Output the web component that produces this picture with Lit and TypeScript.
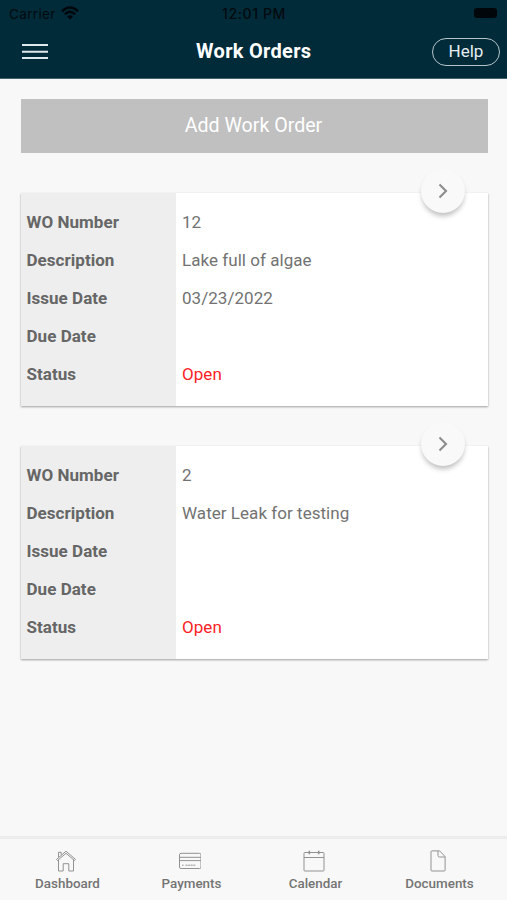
import { LitElement, html, css, svg } from "lit";
import { customElement, property } from "lit/decorators.js";

interface WorkOrder {
  number: string;
  description: string;
  issued: string;
  due: string;
  status: string;
}

const orders: WorkOrder[] = [
  { number: "12", description: "Lake full of algae", issued: "03/23/2022", due: "", status: "Open" },
  { number: "2", description: "Water Leak for testing", issued: "", due: "", status: "Open" },
];

const tabs = [
  {
    label: "Dashboard",
    icon: svg`<path d="M1.500 9.400 11 1.200l9.500 8.200-1 1.100L11 3.300l-8.500 7.200z"/><path d="M3.500 7V2.300h2.700v2.500M3.500 10v11h4.700v-7.300h5.600V21h4.700V10"/>`,
  },
  {
    label: "Payments",
    icon: svg`<rect x=".5" y="3.300" width="21.500" height="15.200" rx="1.500"/><path d="M.5 7.300H22M.5 10.600H22"/><path d="M3 15.200h1.500M6.500 15.200h10" stroke-dasharray="2 .6"/>`,
  },
  {
    label: "Calendar",
    icon: svg`<rect x="1" y="2.500" width="20" height="18.500" rx=".8"/><path d="M1 7.500h20"/><path d="M6.300.7v3.500M15.700.7v3.500" stroke-width="1.600"/>`,
  },
  {
    label: "Documents",
    icon: svg`<path d="M4.800.9h7.800l5.500 5.700V20.200q0 .8-.8.8H4.800q-.8 0-.8-.8V1.700q0-.8.8-.8z"/><path d="M11 1v4.500q0 1.500 1.500 1.500h5.500"/>`,
  },
];

@customElement("work-order-card")
class WorkOrderCard extends LitElement {
  @property({ attribute: false }) order!: WorkOrder;

  static styles = css`
    :host { display: block; position: relative; }
    .card {
      display: grid; grid-template-columns: 155.500px 1fr; height: 213px;
      background: #fff; box-shadow: 0 1px 2px rgba(0, 0, 0, .36);
    }
    .column {
      display: grid; grid-auto-rows: 38px; align-content: start; align-items: center;
      padding: 10px 6px 0; font-size: 17px; letter-spacing: .04px; color: #727272;
    }
    .labels { background: #eee; font-weight: 700; color: #666; letter-spacing: .04px; }
    .status { color: #fb2226; }
    .open {
      position: absolute; right: 22.500px; top: -24.500px; width: 44px; height: 44px;
      padding: 0; border: 0; border-radius: 50%; background: #f9f9f9;
      box-shadow: 0 4px 5px -1px rgba(0, 0, 0, .25);
      display: grid; place-items: center;
    }
    .chevron { width: 10px; height: 16px; fill: none; stroke: #8c8c8c; stroke-width: 2.100; }
  `;

  render() {
    const o = this.order;
    return html`
      <div class="card">
        <div class="column labels">
          <span>WO Number</span><span>Description</span><span>Issue Date</span><span>Due Date</span><span>Status</span>
        </div>
        <div class="column">
          <span>${o.number}</span><span>${o.description}</span><span>${o.issued}</span><span>${o.due}</span>
          <span class="status">${o.status}</span>
        </div>
      </div>
      <button class="open" aria-label="Open work order">
        <svg class="chevron" viewBox="0 0 10 16"><path d="M1.500 1.500 8 8l-6.500 6.500" /></svg>
      </button>`;
  }
}

@customElement("app-root")
class AppRoot extends LitElement {
  static styles = css`
    :host {
      display: flex; flex-direction: column; height: 900px; background: #f8f8f8;
      font-family: Roboto, "Liberation Sans", sans-serif;
    }
    header { flex: none; height: 79px; box-sizing: border-box; background: #012b39; border-bottom: 1px solid #40606b; }
    .status {
      display: grid; grid-template-columns: 1fr auto 1fr; align-items: center;
      height: 27px; padding: 0 10px 0 9px; box-sizing: border-box;
      font-family: Inter, sans-serif; font-size: 13.500px; color: #000a0f;
    }
    .carrier { display: flex; align-items: center; gap: 5px; letter-spacing: .35px; }
    .wifi { width: 18px; height: 14px; margin-bottom: 2px; }
    .time { font-weight: 500; font-size: 14px; letter-spacing: .6px; padding-left: 2px; }
    .battery { justify-self: end; width: 23px; height: 10px; border-radius: 3px; background: #00060a; margin-bottom: 1px; }
    .nav {
      display: grid; grid-template-columns: 1fr auto 1fr; align-items: center;
      height: 49px; padding: 0 7px 0 22px; color: #fff;
    }
    .menu { width: 26px; height: 17px; stroke: #dfe9ed; stroke-width: 2; }
    .title { font-size: 20px; font-weight: 700; letter-spacing: .3px; margin: 0 14.500px 1px 0; }
    .help {
      justify-self: end; box-sizing: border-box; width: 68px; height: 28px; padding: 0 0 2px;
      border: 1.500px solid #b4c4cb; border-radius: 14px; background: none;
      color: #e6edf0; font: 17px Roboto, sans-serif;
    }
    main { flex: 1; padding: 20px 19.500px 0 20.500px; }
    .add {
      display: block; width: 100%; height: 54px; border: 0; background: #c0c0c0; padding: 0 1px 1px 0;
      color: #fff; font: 19.600px Roboto, sans-serif; margin-bottom: 40px;
    }
    work-order-card { margin-bottom: 40px; }
    footer {
      flex: none; box-sizing: border-box; height: 64px; border-top: 3px solid #ececec;
      display: grid; grid-template-columns: repeat(4, 124px); padding: 11px 0 0 5.500px;
    }
    .tab { display: flex; flex-direction: column; align-items: center; gap: 3px; }
    .tab-icon { width: 22px; height: 22px; fill: none; stroke: #929292; stroke-width: 1; margin-right: 3px; }
    .tab-label { font-size: 13.400px; line-height: 18px; font-weight: 500; color: #747474; }
  `;

  render() {
    return html`
      <header>
        <div class="status">
          <span class="carrier">Carrier
            <svg class="wifi" viewBox="0 0 18 14" fill="none" stroke="#00080d" stroke-width="2.500">
              <path d="M1 5.300Q9-2.300 17 5.300M3.900 8.300q5.100-4.800 10.200 0" />
              <path d="M9 13.500 6 10.600q3-2.600 6 0z" fill="#00080d" stroke="none" />
            </svg>
          </span>
          <span class="time">12:01 PM</span>
          <span class="battery"></span>
        </div>
        <div class="nav">
          <svg class="menu" viewBox="0 0 26 17"><path d="M0 2h26M0 8.700h26M0 15h26" /></svg>
          <h1 class="title">Work Orders</h1>
          <button class="help">Help</button>
        </div>
      </header>
      <main>
        <button class="add">Add Work Order</button>
        ${orders.map((o) => html`<work-order-card .order=${o}></work-order-card>`)}
      </main>
      <footer>
        ${tabs.map((t) => html`
          <div class="tab">
            <svg class="tab-icon" viewBox="0 0 22 22">${t.icon}</svg>
            <span class="tab-label">${t.label}</span>
          </div>`)}
      </footer>`;
  }
}
